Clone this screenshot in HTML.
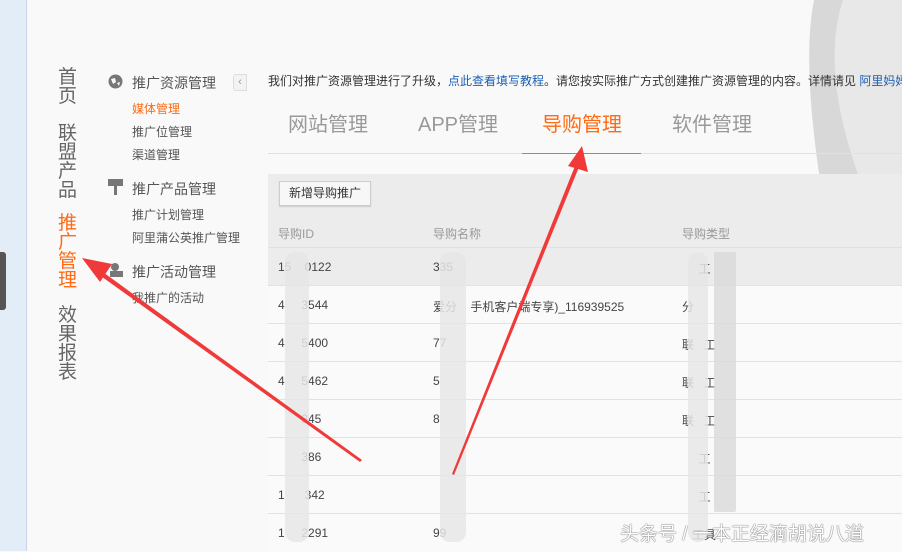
<!DOCTYPE html>
<html><head><meta charset="utf-8"><style>
*{margin:0;padding:0;box-sizing:border-box}
body{width:902px;height:551px;overflow:hidden;background:#f9f9f9;font-family:"Liberation Sans","Noto Sans CJK SC",sans-serif;position:relative;color:#333}
.a{position:absolute;white-space:nowrap}
.nav{font-size:19px;line-height:19px;color:#666;width:20px;white-space:normal}
.sm{font-size:12px;color:#555}
.tt{font-size:14px;color:#555}
.tab{font-size:20px;color:#999;top:108px}
.row{position:absolute;left:268px;width:634px;height:38px;border-bottom:1px solid #e2e2e2;font-size:12px;color:#444}
.row span{position:absolute;top:12px;white-space:pre}
.blur{position:absolute;background:#e6e6e6;border-radius:10px;opacity:.85}
</style></head><body>
<div class="a" style="left:0;top:0;width:27px;height:551px;background:#e3edf7;border-right:1px solid #c6d6e8"></div>
<div class="a" style="left:0;top:252px;width:6px;height:58px;background:#555;border-radius:0 3px 3px 0"></div>
<svg class="a" style="left:800px;top:0" width="102" height="180"><path d="M14 0 L102 0 L102 180 L20 180 Q2 60 14 0Z" fill="#d8d8d9"/><path d="M43 0 L102 0 L102 180 L60 180 Q20 70 43 0Z" fill="#e8e8e8"/></svg>
<div class="a nav" style="left:58px;top:68px">首页</div>
<div class="a nav" style="left:58px;top:124px">联盟产品</div>
<div class="a nav" style="left:58px;top:214px;color:#ff6a12">推广管理</div>
<div class="a nav" style="left:58px;top:306px">效果报表</div>
<svg class="a" style="left:108px;top:74px" width="15" height="15"><circle cx="7.5" cy="7.5" r="7" fill="#777"/><path d="M3 5 L7 4 L8 8 L5 10Z M9 9 L12 8 L11 12Z" fill="#f9f9f9"/></svg>
<div class="a tt" style="left:132px;top:73px">推广资源管理</div>
<div class="a sm" style="left:132px;top:100px;color:#ff6a12">媒体管理</div>
<div class="a sm" style="left:132px;top:123px">推广位管理</div>
<div class="a sm" style="left:132px;top:146px">渠道管理</div>
<svg class="a" style="left:108px;top:179px" width="15" height="16"><rect x="0" y="0" width="15" height="7" fill="#777"/><rect x="6" y="7" width="3" height="9" fill="#777"/></svg>
<div class="a tt" style="left:132px;top:179px">推广产品管理</div>
<div class="a sm" style="left:132px;top:206px">推广计划管理</div>
<div class="a sm" style="left:132px;top:229px">阿里蒲公英推广管理</div>
<svg class="a" style="left:109px;top:262px" width="15" height="16"><circle cx="6" cy="5" r="4" fill="#777"/><rect x="1" y="9" width="13" height="6" fill="#777"/></svg>
<div class="a tt" style="left:132px;top:262px">推广活动管理</div>
<div class="a sm" style="left:132px;top:289px">我推广的活动</div>
<div class="a" style="left:233px;top:74px;width:14px;height:17px;border:1px solid #ddd;border-radius:3px 0 0 3px;background:#f3f3f3;font-size:11px;color:#999;text-align:center;line-height:15px">‹</div>
<div class="a" style="left:268px;top:72px;font-size:12px;color:#333">我们对推广资源管理进行了升级，<span style="color:#1a5fb4">点此查看填写教程</span>。请您按实际推广方式创建推广资源管理的内容。详情请见 <span style="color:#1a5fb4">阿里妈妈</span></div>
<div class="a tab" style="left:288px">网站管理</div>
<div class="a tab" style="left:418px">APP管理</div>
<div class="a tab" style="left:542px;color:#ff6a12">导购管理</div>
<div class="a tab" style="left:672px">软件管理</div>
<div class="a" style="left:268px;top:153px;width:634px;height:1px;background:#e0e0e0"></div>
<div class="a" style="left:522px;top:153px;width:119px;height:1px;background:#ff6a12"></div>
<div class="a" style="left:268px;top:174px;width:634px;height:74px;background:#ececec;border-bottom:1px solid #e0e0e0"></div>
<div class="a" style="left:279px;top:181px;width:92px;height:25px;border:1px solid #ccc;background:#f7f7f7;font-size:12px;line-height:23px;text-align:center;color:#333;box-shadow:0 1px 1px #ccc">新增导购推广</div>
<div class="a" style="left:278px;top:225px;font-size:12px;color:#999">导购ID</div>
<div class="a" style="left:433px;top:225px;font-size:12px;color:#999">导购名称</div>
<div class="a" style="left:682px;top:225px;font-size:12px;color:#999">导购类型</div>
<div class="row" style="top:248px;background:#ececec"><span style="left:10px">15    0122</span><span style="left:165px">335</span><span style="left:414px">     工</span></div>
<div class="row" style="top:286px;background:#fafafa"><span style="left:10px">4     3544</span><span style="left:165px">爱分    手机客户端专享)_116939525</span><span style="left:414px">分</span></div>
<div class="row" style="top:324px;background:#fafafa"><span style="left:10px">4     5400</span><span style="left:165px">77</span><span style="left:414px">联   工</span></div>
<div class="row" style="top:362px;background:#fafafa"><span style="left:10px">4     5462</span><span style="left:165px">5</span><span style="left:414px">联   工</span></div>
<div class="row" style="top:400px;background:#fafafa"><span style="left:10px">       345</span><span style="left:165px">8</span><span style="left:414px">联   工</span></div>
<div class="row" style="top:438px;background:#fafafa"><span style="left:10px">       386</span><span style="left:165px"></span><span style="left:414px">     工</span></div>
<div class="row" style="top:476px;background:#fafafa"><span style="left:10px">1      342</span><span style="left:165px"></span><span style="left:414px">     工</span></div>
<div class="row" style="top:514px;background:#fafafa;border:0"><span style="left:10px">1     2291</span><span style="left:165px">99</span><span style="left:414px">   工具</span></div>
<div class="blur" style="left:285px;top:252px;width:24px;height:290px"></div>
<div class="blur" style="left:440px;top:252px;width:26px;height:290px"></div>
<div class="blur" style="left:688px;top:252px;width:20px;height:290px"></div>
<div class="blur" style="left:714px;top:252px;width:22px;height:260px;background:#dadada;border-radius:2px"></div>
<div class="a" style="left:620px;top:519px;font-size:19px;color:#fff;text-shadow:0 0 1px #555,0 0 1px #555">头条号 / 一本正经滴胡说八道</div>
<svg class="a" style="left:0;top:0" width="902" height="551">
<polygon points="362,460 100,270 98,274 360,462" fill="#f03a3a"/>
<polygon points="82,258 112,264 100,282" fill="#f03a3a"/>
<polygon points="452,474 575,166 579,167 454,475" fill="#f03a3a"/>
<polygon points="582,146 588,172 568,166" fill="#f03a3a"/>
</svg>
</body></html>
